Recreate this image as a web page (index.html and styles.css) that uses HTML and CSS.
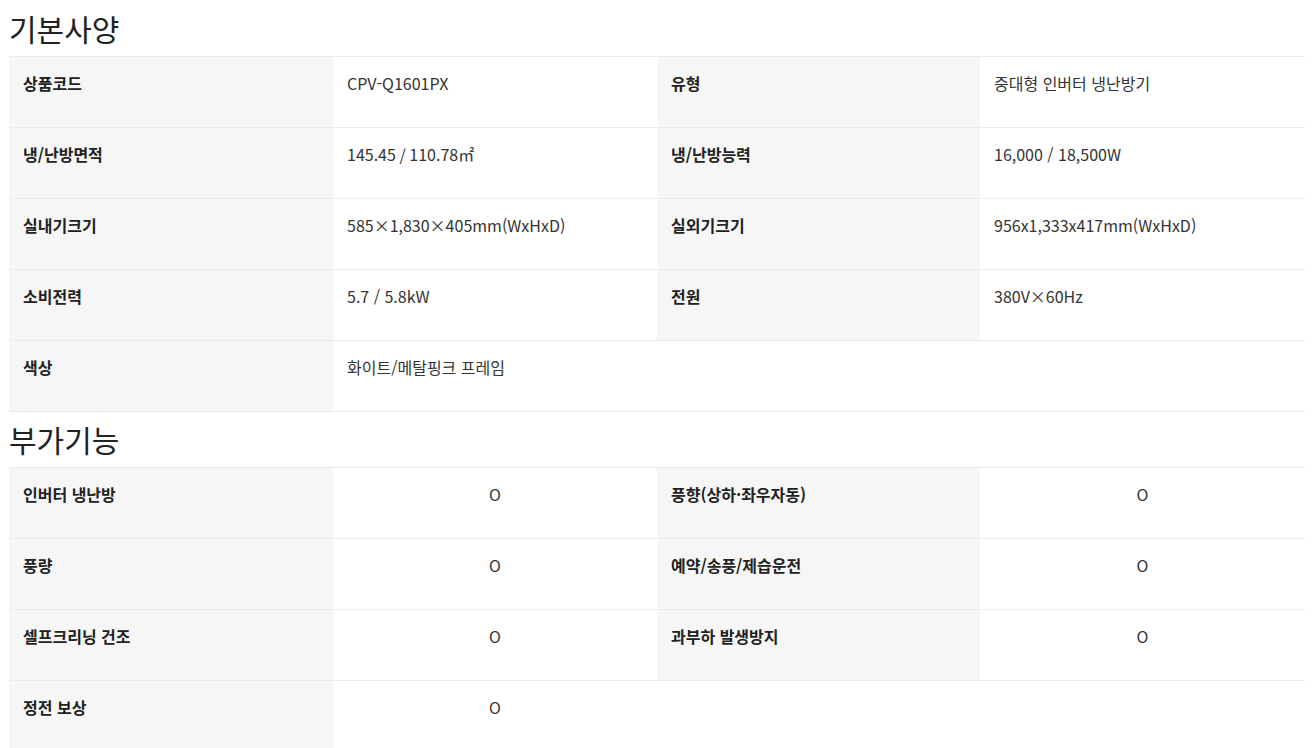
FILE: index.html
```html
<!DOCTYPE html>
<html lang="ko">
<head>
<meta charset="utf-8">
<title>제품 사양</title>
<link rel="stylesheet" href="styles.css">
</head>
<body>
<section class="spec">
  <h2 class="spec-title">기본사양</h2>
  <div class="spec-grid">
    <div class="cell label">상품코드</div>
    <div class="cell value">CPV-Q1601PX</div>
    <div class="cell label">유형</div>
    <div class="cell value">중대형 인버터 냉난방기</div>

    <div class="cell label">냉/난방면적</div>
    <div class="cell value">145.45 / 110.78㎡</div>
    <div class="cell label">냉/난방능력</div>
    <div class="cell value">16,000 / 18,500W</div>

    <div class="cell label">실내기크기</div>
    <div class="cell value">585×1,830×405mm(WxHxD)</div>
    <div class="cell label">실외기크기</div>
    <div class="cell value">956x1,333x417mm(WxHxD)</div>

    <div class="cell label">소비전력</div>
    <div class="cell value">5.7 / 5.8kW</div>
    <div class="cell label">전원</div>
    <div class="cell value">380V×60Hz</div>

    <div class="cell label">색상</div>
    <div class="cell value span3">화이트/메탈핑크 프레임</div>
  </div>
</section>
<section class="spec">
  <h2 class="spec-title">부가기능</h2>
  <div class="spec-grid">
    <div class="cell label">인버터 냉난방</div>
    <div class="cell value center">O</div>
    <div class="cell label">풍향(상하·좌우자동)</div>
    <div class="cell value center">O</div>

    <div class="cell label">풍량</div>
    <div class="cell value center">O</div>
    <div class="cell label">예약/송풍/제습운전</div>
    <div class="cell value center">O</div>

    <div class="cell label">셀프크리닝 건조</div>
    <div class="cell value center">O</div>
    <div class="cell label">과부하 발생방지</div>
    <div class="cell value center">O</div>

    <div class="cell label">정전 보상</div>
    <div class="cell value center">O</div>
    <div class="cell empty span2"></div>
  </div>
</section>
</body>
</html>
```
FILE: styles.css
```css
* { box-sizing: border-box; }
html, body { margin: 0; padding: 0; background: #fff; }
body {
  font-family: "Noto Sans CJK KR", "Noto Sans", sans-serif;
  color: #222;
  padding-top: 1px;
}
.spec {
  margin-left: 9px;
  width: 1296px;
}
.spec-title {
  margin: 0;
  height: 55px;
  padding-top: 7px;
  font-size: 30px;
  line-height: 40px;
  font-weight: 400;
  color: #222;
}
.spec-grid {
  display: grid;
  grid-template-columns: 324px 324px 323px 325px;
  border-bottom: 1px solid #ebebeb;
}
.cell {
  min-height: 71px;
  border-top: 1px solid #ebebeb;
  padding: 14px 14px 0;
  font-size: 16px;
  line-height: 24px;
}
.label {
  background: #f6f6f6;
  font-weight: 700;
  color: #222;
}
.value {
  background: #fff;
  color: #333;
}
.center { text-align: center; padding-left: 0; padding-right: 0; }
.span3 { grid-column: span 3; }
.span2 { grid-column: span 2; }
```
